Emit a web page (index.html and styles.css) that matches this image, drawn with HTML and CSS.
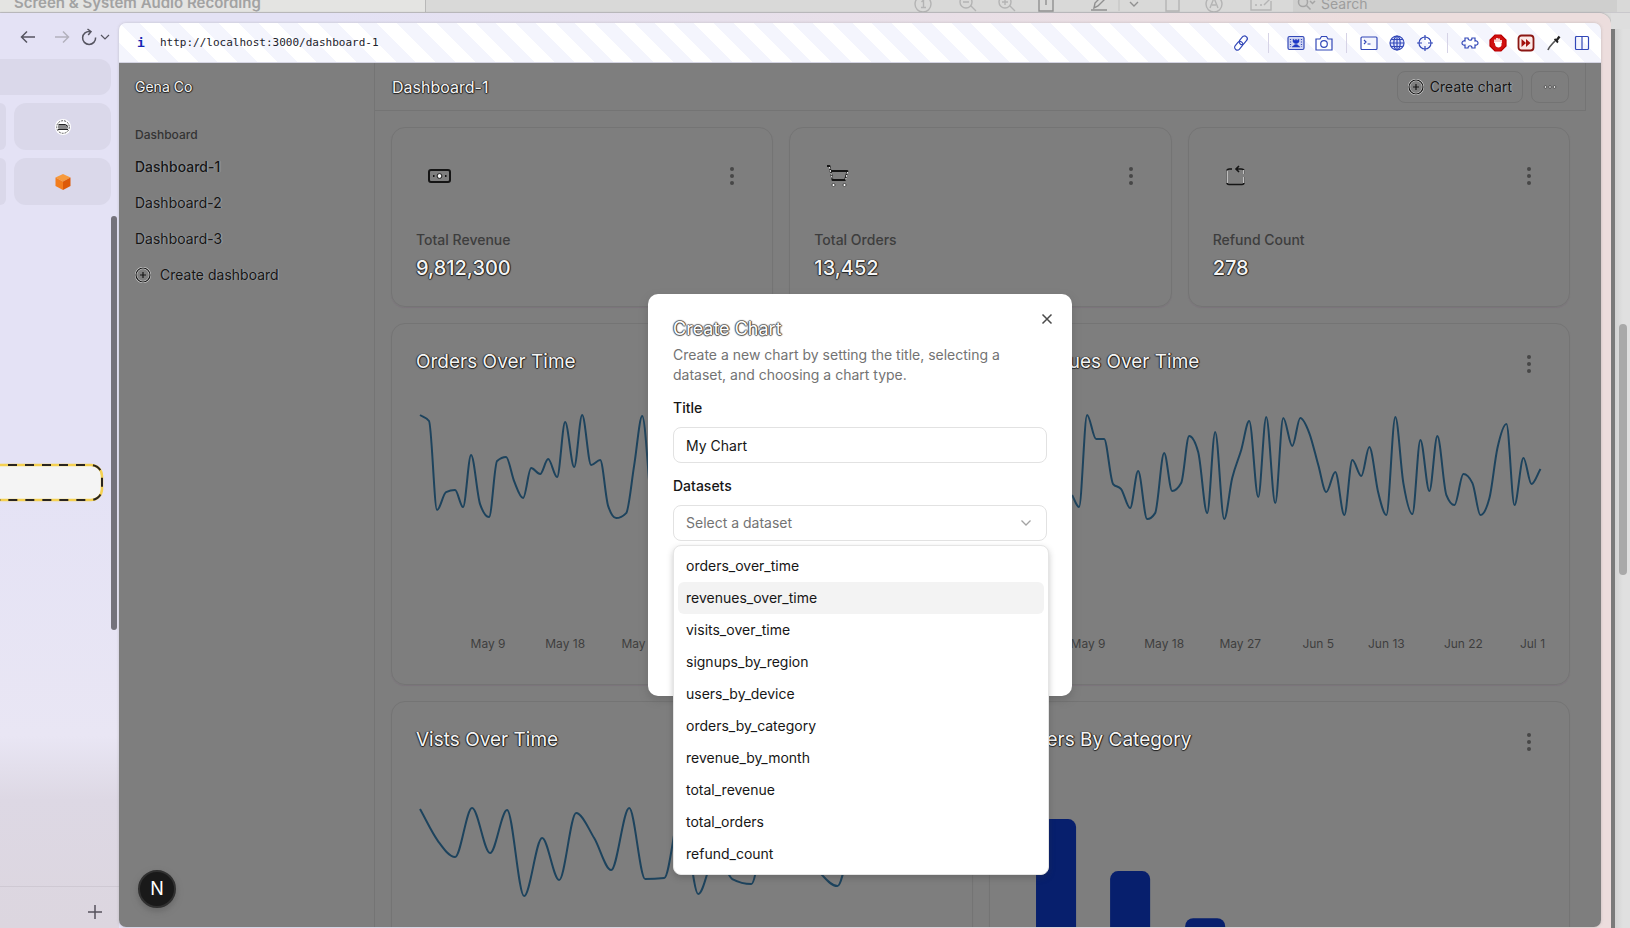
FILE: index.html
```html
<!DOCTYPE html>
<html lang="en">
<head>
<meta charset="utf-8">
<title>Dashboard-1</title>
<link rel="stylesheet" href="styles.css">
</head>
<body>
<div class="desktop">
  <div class="viewer">
    <div class="viewer-title">Screen &amp; System Audio Recording</div>
    <svg class="viewer-tools" width="362" height="22" viewBox="0 0 362 22" fill="none" stroke="#b4b4b4" stroke-width="1.4">
      <circle cx="10" cy="12" r="8"/><path d="M8.500 10l2-2v7M8 15.500h5"/>
      <circle cx="53" cy="10" r="6"/><path d="M58 14l5 5M50 10h6"/>
      <circle cx="92" cy="10" r="6"/><path d="M97 14l5 5M89 10h6M92 7v6"/>
      <g stroke="#909090"><path d="M129 6h-3v13h14v-13h-3M133 13V2"/><path d="M178 18h16M181 16l1-5 8-8 3 3-8 8z"/><path d="M217 10l4 4 4-4"/></g>
      <path d="M206 2v17" stroke="#c8c8c8"/>
      <path d="M253 3h13v16h-13z"/>
      <circle cx="301" cy="12" r="8"/><path d="M297 16l4-10 4 10M299 13h4"/>
      <path d="M358 9v9h-20V6h14M342 13h2M347 13h2M351 13l8-8"/>
    </svg>
    <div class="viewer-search">
      <svg width="20" height="16" viewBox="0 0 20 16" fill="none" stroke="#a5a5a5" stroke-width="1.500"><circle cx="6" cy="7" r="4.500"/><path d="M9.500 10.500l4 4M13 6l2.500 2.500L18 6"/></svg>
      <span>Search</span>
    </div>
  </div>

  <div class="stage">
    <div class="browser">
      <aside class="tabs">
        <div class="tabs-nav">
          <button aria-label="Back"><svg width="16" height="16" viewBox="0 0 16 16" fill="none" stroke="#555460" stroke-width="1.500"><path d="M15 8H1.500M7 2.500L1.500 8 7 13.500"/></svg></button>
          <button aria-label="Forward"><svg width="16" height="16" viewBox="0 0 16 16" fill="none" stroke="#b3b1bd" stroke-width="1.500"><path d="M1 8h13.500M9 2.500L14.500 8 9 13.500"/></svg></button>
          <button aria-label="Reload"><svg width="30" height="18" viewBox="0 0 30 18" fill="none" stroke="#555460" stroke-width="1.500"><path d="M9 3.500a6.500 6.500 0 1 0 5.600 6M6.500 1l3.500 2.700-2.800 3.300"/><path d="M20 7l4 4 4-4" stroke-width="1.200"/></svg></button>
        </div>
        <div class="tile tile-address"></div>
        <div class="tile-row">
          <div class="tile tile-cut"></div>
          <div class="tile"><svg width="16" height="16" viewBox="0 0 16 16"><circle cx="8" cy="8" r="8" fill="#fff"/><circle cx="8" cy="8" r="6.300" fill="none" stroke="#333" stroke-width=".8" stroke-dasharray="2 1"/><rect x="3" y="5.500" width="10" height="4.500" rx="1.500" fill="#888"/><path d="M3.500 5.500h7l2 2M3 10.500h10" stroke="#222" fill="none"/></svg></div>
        </div>
        <div class="tile-row">
          <div class="tile tile-cut"></div>
          <div class="tile"><svg width="16" height="18" viewBox="0 0 16 18"><path d="M8 1l7.500 3.500L8 8.500.500 4.500z" fill="#f79a3c"/><path d="M.500 4.500L8 8.500V17L.500 13z" fill="#f27d1e"/><path d="M15.500 4.500L8 8.500V17l7.500-4z" fill="#dd5a08"/></svg></div>
        </div>
        <div class="tabs-list">
          <div class="tabs-items"><svg class="drop-target" width="106" height="42" viewBox="0 0 106 42" fill="none"><rect x="-20" y="3" width="122" height="35" rx="11" fill="#f4f4f4" stroke="#f5d152" stroke-width="2.500"/><rect x="-20" y="3" width="122" height="35" rx="11" stroke="#2a251f" stroke-width="2" stroke-dasharray="9 8"/></svg></div>
          <div class="tabs-thumb"></div>
        </div>
        <div class="tabs-foot"><button aria-label="New tab"><svg width="16" height="16" viewBox="0 0 16 16" stroke="#55525c" stroke-width="1.500"><path d="M8 1v14M1 8h14"/></svg></button></div>
      </aside>

      <div class="panel">
        <div class="urlbar">
          <b class="info">i</b>
          <span class="url">http://localhost:3000/dashboard-1</span>
          <div class="tools tools-link">
            <button aria-label="Copy link"><svg viewBox="0 0 18 18"><rect x="8.500" y="1.500" width="5.500" height="9.500" rx="2.700" transform="rotate(40 11.200 6.200)"/><rect x="4" y="7" width="5.500" height="9.500" rx="2.700" transform="rotate(40 6.700 11.700)"/></svg></button>
          </div>
          <div class="tools">
            <button aria-label="Picture"><svg viewBox="0 0 18 18"><rect x="1" y="2.500" width="16" height="13" rx="1.500" fill="#cfd4f2"/><path d="M5 13l3-2.500h2L13 13zM6 5l2 1.500L9 5l1 1.500L12 5v3l-2 1.500H8L6 8z" fill="#1d36c8" stroke-width=".5"/><path d="M3.500 5v8M14.500 5v8" stroke-dasharray="1 1.500"/></svg></button>
            <button aria-label="Camera"><svg viewBox="0 0 18 18"><path d="M1 5h4l1.500-2.500h5L13 5h4v11H1z"/><circle cx="9" cy="10" r="3.300"/></svg></button>
          </div>
          <div class="tools">
            <button aria-label="Console"><svg viewBox="0 0 18 18"><rect x="1" y="3" width="16" height="12.500" rx="1"/><path d="M4 6l2 2-2 2M7.500 10h3"/></svg></button>
            <button aria-label="Network"><svg viewBox="0 0 18 18"><circle cx="9" cy="9" r="7" fill="#dfe4fd"/><ellipse cx="9" cy="9" rx="3.200" ry="7"/><path d="M2 9h14M3 5.500h12M3 12.500h12M9 2v14"/></svg></button>
            <button aria-label="Inspect"><svg viewBox="0 0 18 18"><circle cx="9" cy="9" r="6"/><path d="M9 1v5M9 12v5M1 9h5M12 9h5"/></svg></button>
          </div>
          <div class="tools">
            <button aria-label="Extensions"><svg viewBox="0 0 18 18"><path d="M4 4h3c0 3 4 3 4 0h3v3c4-1 4 5 0 4v3h-3c0-3-4-3-4 0H4v-3c-4 1-4-5 0-4z"/></svg></button>
            <button aria-label="Blocker"><svg viewBox="0 0 18 18"><path d="M6 1h6l5 5v6l-5 5H6l-5-5V6z" fill="#d01010" stroke="#b00"/><path d="M6 9V5.500M8 8V4M10 8V4.500M12 9V6" stroke="#fff" stroke-width="1.600"/><path d="M5.500 8h7v3c0 3-5 3-6 1z" fill="#fff" stroke="none"/></svg></button>
            <button aria-label="Speed"><svg viewBox="0 0 18 18"><rect x="1.500" y="1.500" width="15" height="15" rx="3" fill="#fbe9e7" stroke="#8c1713" stroke-width="1.800"/><path d="M4.500 5l4.500 4-4.500 4zM9 5l4.500 4L9 13z" fill="#a3120e" stroke="none"/></svg></button>
            <button aria-label="Color picker"><svg viewBox="0 0 18 18"><path d="M3 16c1-3 4-6 7-9" stroke="#555" stroke-width="1.700"/><path d="M9.500 5l3.500 3.500" stroke="#222" stroke-width="1.800"/><path d="M11.500 6.500l3-4" stroke="#222" stroke-width="2.400"/></svg></button>
            <button aria-label="Split view"><svg viewBox="0 0 18 18"><rect x="2.500" y="2.500" width="13" height="13" rx="1"/><path d="M9 2.500v13"/></svg></button>
          </div>
        </div>

        <div class="page">
          <nav class="sidebar">
            <div class="brand halo">Gena Co</div>
            <div class="nav-list">
              <div class="nav-head">Dashboard</div>
              <a class="nav-item active" href="#d1">Dashboard-1</a>
              <a class="nav-item" href="#d2">Dashboard-2</a>
              <a class="nav-item" href="#d3">Dashboard-3</a>
              <button class="nav-item"><svg class="plus" viewBox="0 0 16 16"><circle class="glow" cx="8" cy="8" r="7"/><circle cx="8" cy="8" r="7"/><path d="M8 5v6M5 8h6"/></svg>Create dashboard</button>
            </div>
          </nav>

          <main class="main">
            <header class="topbar">
              <h1 class="halo">Dashboard-1</h1>
              <button class="outline"><svg class="plus" viewBox="0 0 16 16"><circle class="glow" cx="8" cy="8" r="7"/><circle cx="8" cy="8" r="7"/><path d="M8 5v6M5 8h6"/></svg>Create chart</button>
              <button class="outline outline-icon" aria-label="More"><svg width="16" height="16" viewBox="0 0 16 16" fill="#eee" stroke="#222" stroke-width=".6"><circle cx="3.500" cy="8" r="1.300"/><circle cx="8" cy="8" r="1.300"/><circle cx="12.500" cy="8" r="1.300"/></svg></button>
            </header>
            <div class="board">
              <div class="stats">
                <section class="card">
                  <div class="card-top">
                    <span class="card-icon"><svg width="24" height="24" viewBox="0 0 24 24" fill="none" stroke="#151515" stroke-width="2"><rect x="1" y="6" width="21" height="12" rx="2"/><circle cx="11.500" cy="12" r="2.400" fill="#fff" stroke-width="1"/><path d="M5 12h1.500M17 12h1.500"/></svg></span>
                    <button class="dots" aria-label="Options"><i></i><i></i><i></i></button>
                  </div>
                  <h2 class="stat-label">Total Revenue</h2><p class="stat-value halo">9,812,300</p>
                </section>
                <section class="card">
                  <div class="card-top">
                    <span class="card-icon"><svg width="24" height="24" viewBox="0 0 24 24" fill="none" stroke="#151515" stroke-width="1.800"><path d="M1 2h2.500L6.500 16H19l2.500-9H5" stroke-linejoin="round"/><path d="M3.500 3l2.800 12M21.500 8l-1.800 7.500" stroke="#fff" stroke-width="1" stroke-dasharray="2 1"/><circle cx="7.500" cy="21" r="1.500" fill="#fff" stroke-width=".6"/><circle cx="18.500" cy="21" r="1.500" fill="#fff" stroke-width=".6"/></svg></span>
                    <button class="dots" aria-label="Options"><i></i><i></i><i></i></button>
                  </div>
                  <h2 class="stat-label">Total Orders</h2><p class="stat-value halo">13,452</p>
                </section>
                <section class="card">
                  <div class="card-top">
                    <span class="card-icon"><svg width="24" height="24" viewBox="0 0 24 24" fill="none" stroke="#151515" stroke-width="1.600"><path d="M7 5H4.500Q2 5 2 7v11.500Q2 20.500 4 20.500h13q2 0 2-2V13M19 10V7q0-2-3-2h-4M14 2l-3 3 3 3"/><path d="M2.200 6.500v12.500M18.800 13v6M18.800 6v4" stroke="#fff" stroke-width="1"/></svg></span>
                    <button class="dots" aria-label="Options"><i></i><i></i><i></i></button>
                  </div>
                  <h2 class="stat-label">Refund Count</h2><p class="stat-value halo">278</p>
                </section>
              </div>
              <div class="charts">
                <section class="card">
                  <div class="chart-top"><h2 class="halo">Orders Over Time</h2><button class="dots" aria-label="Options"><i></i><i></i><i></i></button></div>
                  <svg class="chart" viewBox="0 0 531 260" data-series="orders"><path class="line"/><text x="72" y="248">May 9</text><text x="149" y="248">May 18</text><text x="226" y="248">May 27</text></svg>
                </section>
                <section class="card">
                  <div class="chart-top"><h2 class="halo">Revenues Over Time</h2><button class="dots" aria-label="Options"><i></i><i></i><i></i></button></div>
                  <svg class="chart" viewBox="0 0 531 260" data-series="revenues"><path class="line"/><text x="74" y="248">May 9</text><text x="150" y="248">May 18</text><text x="226" y="248">May 27</text><text x="304" y="248">Jun 5</text><text x="372" y="248">Jun 13</text><text x="449" y="248">Jun 22</text><text x="518" y="248">Jul 1</text></svg>
                </section>
                <section class="card">
                  <div class="chart-top"><h2 class="halo">Vists Over Time</h2><button class="dots" aria-label="Options"><i></i><i></i><i></i></button></div>
                  <svg class="chart" viewBox="0 0 531 260" data-series="visits"><path class="line"/></svg>
                </section>
                <section class="card">
                  <div class="chart-top"><h2 class="halo">Orders By Category</h2><button class="dots" aria-label="Options"><i></i><i></i><i></i></button></div>
                  <svg class="chart" viewBox="0 0 531 260"><g fill="#071f6d"><rect x="22" y="41" width="40" height="180" rx="8"/><rect x="96" y="93" width="40" height="128" rx="8"/><rect x="171" y="140" width="40" height="81" rx="8"/></g></svg>
                </section>
              </div>
            </div>
          </main>

          <div class="dev-badge">N</div>

          <div class="overlay">
            <form class="dialog" role="dialog" aria-labelledby="dlg-title">
              <button type="button" class="close" aria-label="Close"><svg width="16" height="16" viewBox="0 0 16 16" stroke="#4a4a4a" stroke-width="1.500"><path d="M3.500 3.500l9 9M12.500 3.500l-9 9"/></svg></button>
              <h2 id="dlg-title">Create Chart</h2>
              <p class="dialog-text">Create a new chart by setting the title, selecting a dataset, and choosing a chart type.</p>
              <label for="title">Title</label>
              <input id="title" class="field" type="text" value="My Chart">
              <label for="dataset">Datasets</label>
              <div class="select">
                <button type="button" id="dataset" class="field" aria-haspopup="listbox" aria-expanded="true"><span>Select a dataset</span><svg width="16" height="16" viewBox="0 0 16 16" fill="none" stroke="#a3a3a3" stroke-width="1.300"><path d="M3.500 5.500L8 10l4.500-4.500"/></svg></button>
                <ul class="options" role="listbox">
                  <li role="option">orders_over_time</li>
                  <li role="option" class="hover">revenues_over_time</li>
                  <li role="option">visits_over_time</li>
                  <li role="option">signups_by_region</li>
                  <li role="option">users_by_device</li>
                  <li role="option">orders_by_category</li>
                  <li role="option">revenue_by_month</li>
                  <li role="option">total_revenue</li>
                  <li role="option">total_orders</li>
                  <li role="option">refund_count</li>
                </ul>
              </div>
            </form>
          </div>
        </div>
      </div>
    </div>
    <div class="viewer-edge"><div class="viewer-thumb"></div></div>
  </div>
</div>
<script src="charts.js"></script>
</body>
</html>
```
FILE: styles.css
```css
* { box-sizing: border-box; }
body { margin: 0; font-family: Inter, "Liberation Sans", sans-serif; font-size: 14px; line-height: 20px; }
h1, h2, p, ul { margin: 0; padding: 0; font-weight: 400; }
button { font: inherit; border: 0; background: none; padding: 0; color: inherit; text-align: left; }
svg { display: block; flex: none; }

.desktop { height: 100vh; display: flex; flex-direction: column; overflow: hidden; background: #dcdcdb; }

/* Window behind */
.viewer { height: 13px; flex: none; display: flex; align-items: flex-end; overflow: hidden; background: #d9d9d8; border-bottom: 1px solid #c9c8cc; }
.viewer-title { width: 426px; height: 24px; flex: none; padding-left: 14px; border-right: 1px solid #b8b8b8; background: #e4e4e2; color: #a2a2a2; font-size: 15px; font-weight: 600; line-height: 30px; white-space: nowrap; }
.viewer-tools { margin-left: auto; margin-right: 18px; margin-bottom: -2px; }
.viewer-search { width: 324px; height: 24px; flex: none; display: flex; align-items: flex-start; gap: 4px; padding: 7px 4px 0; margin-right: 13px; background: #cfcfce; color: #9d9d9d; line-height: 18px; }

.stage { flex: 1; min-height: 0; display: flex; }
.viewer-edge { width: 19px; flex: none; padding: 295px 3px 0 8px; border-top: 16px solid #dedede; background: linear-gradient(90deg, #7a7a7a 4px, #d2d2d2 4px, #e0e0e0 12px); background-clip: padding-box; }
.viewer-thumb { height: 251px; border-radius: 4px; background: #a9a9a9; }

/* Browser window */
.browser { flex: 1; min-width: 0; display: flex; padding: 10px 10px 1px 0; border-radius: 0 12px 0 0; background: linear-gradient(90deg, #e4e2f5 20%, #ecdddd 85%); box-shadow: 0 0 2px #888; }
.tabs { width: 119px; flex: none; display: flex; flex-direction: column; gap: 8px; margin-top: -10px; margin-bottom: -1px; padding-top: 10px; background: linear-gradient(#e4e2f5 50%, #e9e6f4 79%, #ddd8e4 86%, #dcd6df); }
.tabs-nav { height: 28px; display: flex; align-items: center; gap: 18px; padding-left: 20px; }
.tabs-nav button + button + button { margin-left: -7px; }
.tile { height: 47px; flex: 1; display: flex; align-items: center; justify-content: center; border-radius: 12px; background: #dad8ea; }
.tile-address { height: 36px; flex: none; margin-right: 8px; border-radius: 0 12px 12px 0; }
.tile-row { display: flex; gap: 8px; margin-right: 8px; }
.tile-cut { flex: none; width: 6px; border-radius: 0 12px 12px 0; }
.tabs-list { flex: 1; min-height: 0; display: flex; justify-content: space-between; padding: 3px 2px 0 0; }
.tabs-items { padding-top: 246px; }
.tabs-thumb { width: 6px; height: 414px; border-radius: 3px; background: #74727b; }
.tabs-foot { height: 42px; display: flex; align-items: center; justify-content: flex-end; padding: 8px 16px 0 0; border-top: 1px solid #cfc9d3; }

.panel { flex: 1; min-width: 0; display: flex; flex-direction: column; border-radius: 7px; overflow: hidden; box-shadow: 0 0 3px #8886; }
.urlbar { height: 40px; flex: none; display: flex; align-items: center; padding: 1px 5px 0 18px; background: repeating-linear-gradient(45deg, #f4f5fd 0 14px, #fff 14px 28px); border-bottom: 1px solid #d4d4e2; }
.info { width: 23px; color: #1626b4; font-family: "DejaVu Sans Mono", monospace; font-size: 13px; }
.url { margin-right: auto; color: #22222c; font-family: "DejaVu Sans Mono", monospace; font-size: 11px; }
.tools { display: flex; position: relative; margin-left: 17px; }
.tools + .tools::before { content: ""; position: absolute; left: -9px; top: 0; height: 20px; border-left: 1px solid #d6d3e6; }
.tools-link { margin-right: 10px; }
.tools-link + .tools::before { left: -14px; }
.tools button { width: 28px; height: 20px; display: flex; align-items: center; justify-content: center; }
.tools svg { width: 18px; height: 18px; fill: none; stroke: #3348b8; stroke-width: 1.2; }

/* Dashboard */
.page { flex: 1; min-height: 0; display: flex; position: relative; overflow: hidden; background: #7e7e7e; color: #131313; }
.halo { color: #f4f4f4; text-shadow: 1px 0 1px #111, 0 1px 1px #222, -1px 0 1px #333; }
.sidebar { width: 256px; flex: none; border-right: 1px solid #747474; }
.brand { height: 48px; padding-left: 16px; line-height: 48px; }
.nav-list { display: flex; flex-direction: column; gap: 4px; padding: 8px 16px; }
.nav-head { height: 32px; margin-bottom: -4px; color: #343434; font-size: 12px; font-weight: 500; line-height: 32px; }
.nav-item { height: 32px; display: flex; align-items: center; gap: 9px; color: #161616; text-decoration: none; text-shadow: 1px 0 1px #ccc8; }
.nav-item.active { font-weight: 500; }
.plus { width: 16px; height: 16px; fill: none; stroke: #161616; stroke-width: 1.2; }
.plus .glow { stroke: #ddd; stroke-width: 2.2; }

.main { flex: 1; min-width: 0; margin-right: 15px; }
.topbar { height: 48px; display: flex; align-items: center; gap: 8px; padding: 0 16px 0 17px; border-right: 1px solid #747474; border-bottom: 1px solid #747474; }
.topbar h1 { margin-right: auto; font-size: 16px; }
.outline { height: 32px; display: flex; align-items: center; gap: 6px; padding: 0 10px; border: 1px solid #737373; border-radius: 8px; text-shadow: 1px 0 1px #ddd8; }
.board { display: flex; flex-direction: column; gap: 16px; padding: 16px; }
.stats { display: grid; grid-template-columns: repeat(3, 1fr); gap: 16px; }
.charts { display: grid; grid-template-columns: repeat(2, 1fr); gap: 16px; }
.card { padding: 24px; border: 1px solid #747474; border-radius: 14px; box-shadow: 0 1px 1px #7676; }
.card-top { height: 48px; display: flex; align-items: center; justify-content: space-between; }
.card-icon { width: 48px; padding-left: 12px; }
.dots { width: 32px; height: 32px; display: flex; flex-direction: column; align-items: center; justify-content: center; gap: 3px; }
.dots i { width: 4px; height: 4px; border-radius: 50%; background: #474747; }
.stat-label { margin-top: 30px; color: #3d3d3d; font-size: 14px; font-weight: 500; }
.stat-value { margin-top: 4px; font-size: 20px; font-weight: 500; line-height: 28px; }
.chart-top { height: 32px; display: flex; align-items: flex-start; justify-content: space-between; margin-bottom: 20px; }
.chart-top h2 { font-size: 19px; line-height: 28px; }
.chart { width: 100%; height: auto; }
.chart .line { fill: none; stroke: #1d435d; stroke-width: 2; }
.chart text { fill: #3e3e3e; font-size: 12px; text-anchor: middle; }
.dev-badge { position: absolute; left: 19px; bottom: 19px; width: 38px; height: 38px; border: 2px solid #303030; border-radius: 50%; background: #191919; color: #fff; font-size: 18px; line-height: 34px; text-align: center; box-shadow: 0 3px 6px #5558; }

/* Dialog */
.overlay { position: absolute; inset: 0; display: flex; align-items: center; justify-content: center; }
.dialog { position: relative; width: 424px; min-height: 402px; display: flex; flex-direction: column; padding: 25px; border-radius: 10px; background: #fff; box-shadow: 0 4px 8px #5556; }
.close { position: absolute; top: 17px; right: 17px; }
.dialog h2 { color: #fff; font-size: 18px; line-height: 20px; text-shadow: 1px 0 1px #333, -1px 0 1px #555, 0 1px 1px #555, 0 -1px 1px #777; }
.dialog-text { margin: 6px 0 13px; color: #737373; }
.dialog label { height: 20px; color: #161616; font-weight: 500; margin-bottom: 9px; }
.field { width: 100%; height: 36px; display: flex; align-items: center; justify-content: space-between; padding: 0 12px; border: 1px solid #e2e2e2; border-radius: 8px; background: #fff; color: #161616; font: inherit; }
input.field { margin-bottom: 13px; }
button.field { color: #737373; }
.select { position: relative; }
.options { position: absolute; top: 40px; left: 0; right: -2px; padding: 4px; list-style: none; border: 1px solid #e5e5e5; border-radius: 8px; background: #fff; color: #161616; box-shadow: 0 3px 6px #3334; }
.options li { height: 32px; padding: 0 8px; border-radius: 6px; line-height: 32px; }
.options .hover { background: #f3f3f3; }
```
FILE: charts.js
```js
const series = {
  orders: [[4,15],[13,21],[21,110],[30,92],[39,90],[47,107],[55,55],[64,104],[73,117],[81,61],[90,57],[98,81],[107,98],[115,68],[124,74],[132,59],[141,77],[149,22],[158,67],[166,15],[175,65],[184,60],[192,106],[200,118],[210,113],[218,65],[226,16],[235,107]],
  revenues: [[58,95],[65,107],[73,15],[82,39],[90,39],[99,84],[107,89],[116,108],[124,71],[133,119],[141,113],[150,53],[158,91],[167,83],[175,36],[184,52],[193,113],[201,32],[210,119],[218,78],[227,50],[235,21],[244,97],[252,17],[261,103],[269,18],[278,46],[286,18],[295,33],[304,65],[312,92],[321,72],[330,115],[338,60],[347,76],[355,47],[364,93],[372,115],[381,17],[389,83],[398,114],[406,40],[415,91],[423,36],[432,95],[440,105],[449,74],[458,83],[466,115],[475,98],[483,48],[492,24],[500,105],[509,58],[517,84],[526,69]],
  visits: [[4,31],[22,63],[39,79],[56,30],[74,75],[91,32],[108,118],[126,60],[143,102],[160,35],[178,60],[195,92],[213,30],[229,101],[248,100],[265,30],[282,116],[300,75],[316,101],[335,106],[351,42],[369,60],[386,70],[403,94],[421,108],[436,52]]
};

// Monotone cubic interpolation through the points.
function curve(p) {
  const s = p.slice(1).map((q, i) => (q[1] - p[i][1]) / (q[0] - p[i][0]));
  const t = p.map((q, i) => {
    if (i === 0) return s[0];
    if (i === p.length - 1) return s[i - 1];
    const a = s[i - 1], b = s[i];
    if (a * b <= 0) return 0;
    return Math.sign(a) * Math.min(Math.abs(a), Math.abs(b), Math.abs(a + b) / 4) * 2;
  });
  let d = `M${p[0]}`;
  for (let i = 1; i < p.length; i++) {
    const [x0, y0] = p[i - 1], [x1, y1] = p[i], h = (x1 - x0) / 3;
    d += `C${x0 + h},${y0 + h * t[i - 1]} ${x1 - h},${y1 - h * t[i]} ${x1},${y1}`;
  }
  return d;
}

document.querySelectorAll("[data-series]").forEach(el => {
  el.querySelector(".line").setAttribute("d", curve(series[el.dataset.series]));
});
```
